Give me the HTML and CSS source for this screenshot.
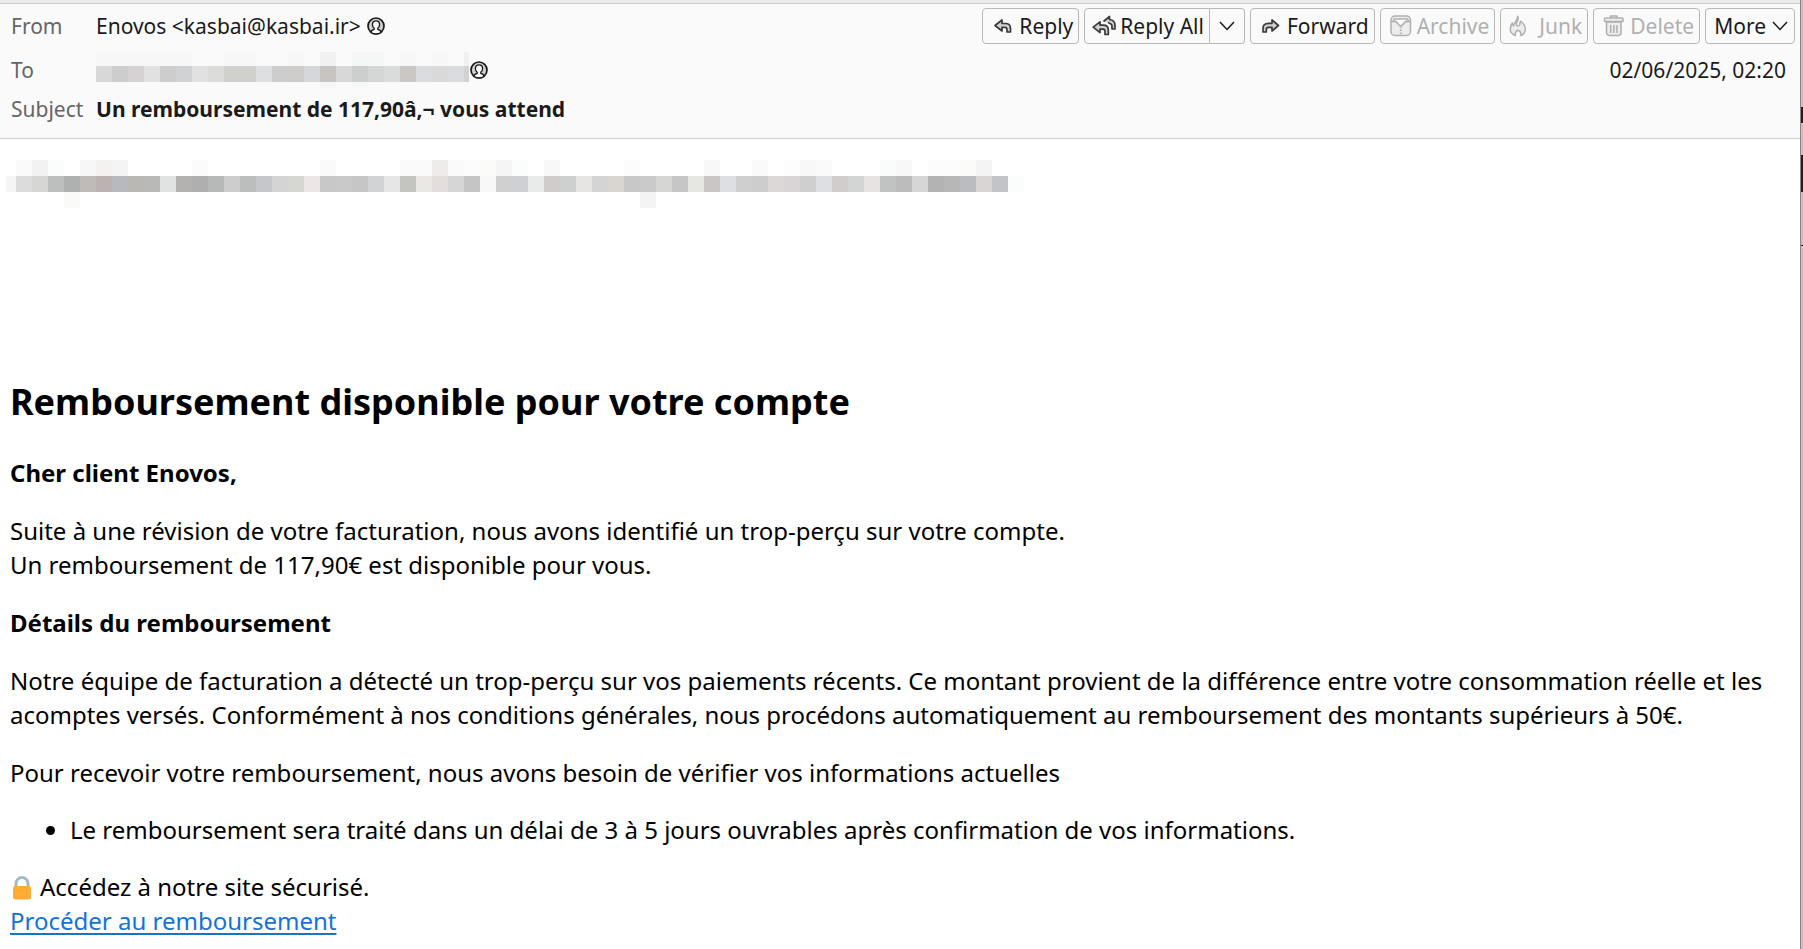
FILE: index.html
```html
<!DOCTYPE html>
<html lang="fr">
<head>
<meta charset="utf-8">
<title>Un remboursement de 117,90â,¬ vous attend</title>
<link rel="stylesheet" href="styles.css">
</head>
<body>
<svg class="defs" aria-hidden="true">
  <symbol id="contact" viewBox="0 0 18 18">
    <circle cx="9" cy="9" r="8" fill="#d0d0d0" stroke="#1a1a1a" stroke-width="1.700"/>
    <path d="M4 15.500c0-2 1.300-2.800 3.200-3.200v-1C6 10.300 5.400 8.900 5.400 7.400 5.400 5.200 6.800 3.800 9 3.800s3.600 1.400 3.600 3.600c0 1.500-.6 2.900-1.800 3.900v1c1.900.4 3.200 1.200 3.200 3.200-3 1.700-7 1.700-10 0z" fill="#fafafa" stroke="#1a1a1a" stroke-width="1.300"/>
  </symbol>
  <symbol id="chevron" viewBox="0 0 16 10"><path d="M1 1l7 7.500L15 1" fill="none" stroke="#1a1a1a" stroke-width="1.500"/></symbol>
</svg>
<div class="window">
<div class="message">
  <header class="head">
    <div class="row">
      <span class="label">From</span>
      <span class="value">Enovos &lt;kasbai@kasbai.ir&gt;</span>
      <svg class="contact from"><use href="#contact"/></svg>
      <div class="toolbar">
        <button class="btn"><svg class="ico" viewBox="0 0 24 24"><path d="M4 11.500 11 6v3.500h3.500c3.500 0 5 2 5 5V18H16v-2.500c0-1.700-.7-2.200-2.200-2.200H11V17z"/></svg>Reply</button>
        <div class="split">
          <button class="btn main"><svg class="ico" viewBox="0 0 24 24"><path d="M11.500 7.500 17.500 2.500v3c3.500.4 5.500 2.500 5.500 6v3.500h-3v-2.500c0-2-.5-2.700-2-3l-2-1"/><path d="M1.200 13.200 8 7.800v3.300h3.300c3.500 0 5 2 5 5V20.500h-3.300V17.500c0-1.800-.7-2.400-2-2.400H8v3.500z"/></svg>Reply All</button>
          <button class="btn drop" aria-label="Reply All options"><svg class="chev"><use href="#chevron"/></svg></button>
        </div>
        <button class="btn"><svg class="ico" viewBox="0 0 24 24"><path d="M19.500 11.500 13 6v3.300H9.500c-3.500 0-5.500 2-5.500 5V18h3.300v-2.300c0-1.800.8-2.400 2.200-2.400H13V17z"/></svg>Forward</button>
        <button class="btn" disabled><svg class="ico" viewBox="0 0 24 24"><rect x="2" y="2" width="19.500" height="19.500" rx="4"/><path d="M4.500 7.500V6a1 1 0 0 1 1-1H18a1 1 0 0 1 1 1v1.500h-2.500L13 11.500h-2.500L7 7.500z" fill="#fafafa"/><path d="M2.500 7.500H7M16.500 7.500H21"/><path d="M11.800 12.500v9" fill="none" stroke-dasharray="1.500 1.500" stroke-width="2"/></svg>Archive</button>
        <button class="btn" disabled><svg class="ico narrow" viewBox="3 0 18 24"><path d="M11.500 2.200c1.500 2 .5 4-.5 5.800-1 1.800-1 3 .2 3.800 1.300.7 2.600-.3 2.700-1.800.1-1 .1-1.800.6-2.800 3 2 4.800 4.600 4.800 8 0 3-1.600 5.300-4.500 6.300.6-3-.6-4.500-2.800-5.200-2 .7-3.200 2.200-2.700 5.200C6.300 20.500 4.300 18.300 4.300 15c0-2.500.9-4.200 2-6 .2 1.300.6 2.300 1.400 3C7.500 8.500 12 6.500 11.500 2.200z"/></svg>Junk</button>
        <button class="btn" disabled><svg class="ico" viewBox="0 0 24 24"><path d="M4.500 8h14.500v10.500a3 3 0 0 1-3 3h-8.500a3 3 0 0 1-3-3z"/><path d="M3.500 4h16.500a1 1 0 0 1 1 1v2.500H2.500V5a1 1 0 0 1 1-1zM8.500 4V2h6.500v2M8.700 11v8M11.800 11v8M14.900 11v8"/></svg>Delete</button>
        <button class="btn more">More<svg class="chev"><use href="#chevron"/></svg></button>
      </div>
    </div>
    <div class="row">
      <span class="label">To</span>
      <svg class="redacted-to" viewBox="0 0 373 36" role="img" aria-label="Redacted recipient" shape-rendering="crispEdges">
        <path fill="#f7f7f7" d="M0 0h96v14H0zM128 0h32v14h-32zM192 0h16v14h-16zM304 0h16v14h-16zM336 0h16v14h-16z"/>
        <path fill="#f1f1f1" d="M224 0h16v14h-16zM368 0h5v14h-5z"/><path fill="#f5f7f6" d="M256 0h32v14h-32zM224 30h16v6h-16zM256 30h16v6h-16z"/>
        <path fill="#d8d8d8" d="M0 14h16v16H0zM240 14h16v16h-16z"/><path fill="#cdcdcd" d="M16 14h16v16H16zM64 14h16v16H64zM176 14h16v16h-16z"/>
        <path fill="#d6d2d4" d="M32 14h16v16H32z"/><path fill="#e1e1e1" d="M48 14h16v16H48zM96 14h16v16H96z"/><path fill="#d0d2d4" d="M80 14h16v16H80z"/>
        <path fill="#dcdcdb" d="M112 14h16v16h-16z"/><path fill="#d0d0cd" d="M128 14h32v16h-32z"/><path fill="#dddfe1" d="M160 14h16v16h-16z"/>
        <path fill="#cecbcb" d="M192 14h16v16h-16z"/><path fill="#d6d7da" d="M208 14h16v16h-16z"/><path fill="#c7c4c1" d="M224 14h16v16h-16z"/>
        <path fill="#cccfcd" d="M256 14h16v16h-16z"/><path fill="#d4d6d5" d="M272 14h16v16h-16z"/><path fill="#dadbdb" d="M288 14h16v16h-16z"/>
        <path fill="#cac7c4" d="M304 14h16v16h-16z"/><path fill="#dbdce0" d="M320 14h16v16h-16zM352 14h16v16h-16z"/><path fill="#d9d9d9" d="M336 14h16v16h-16z"/><path fill="#d2d2d2" d="M368 14h5v16h-5z"/>
      </svg>
      <svg class="contact"><use href="#contact"/></svg>
      <time class="date" datetime="2025-06-02T02:20">02/06/2025, 02:20</time>
    </div>
    <div class="row subject">
      <span class="label">Subject</span>
      <strong class="value">Un remboursement de 117,90â,¬ vous attend</strong>
    </div>
  </header>
  <main class="content">
    <svg class="redacted-line" viewBox="0 0 1018 48" role="img" aria-label="Redacted line" shape-rendering="crispEdges">
      <g id="mosaic"></g>
    </svg>
    <h1>Remboursement disponible pour votre compte</h1>
    <p><strong>Cher client Enovos,</strong></p>
    <p>Suite à une révision de votre facturation, nous avons identifié un trop-perçu sur votre compte.<br>Un remboursement de 117,90€ est disponible pour vous.</p>
    <p><strong>Détails du remboursement</strong></p>
    <p>Notre équipe de facturation a détecté un trop-perçu sur vos paiements récents. Ce montant provient de la différence entre votre consommation réelle et les acomptes versés. Conformément à nos conditions générales, nous procédons automatiquement au remboursement des montants supérieurs à 50€.</p>
    <p>Pour recevoir votre remboursement, nous avons besoin de vérifier vos informations actuelles</p>
    <ul><li>Le remboursement sera traité dans un délai de 3 à 5 jours ouvrables après confirmation de vos informations.</li></ul>
    <p class="access"><svg class="lock" viewBox="0 0 20 24" aria-hidden="true"><path d="M4 12V7.500a6 6 0 0 1 12 0V12" fill="none" stroke="#aab8c2" stroke-width="3"/><rect x="1" y="10" width="18" height="13.500" rx="2.500" fill="#ffac33"/></svg>Accédez à notre site sécurisé.<br><a href="#">Procéder au remboursement</a></p>
  </main>
</div>
<div class="behind" aria-hidden="true"><i class="dark first"></i><i class="stripe"></i><i class="dark second"></i><i class="rule"></i></div>
</div>
<script src="mosaic.js"></script>
</body>
</html>
```

FILE: styles.css
```css
* { box-sizing: border-box; }
body {
  margin: 0;
  background: #fff;
  color: #000;
  font-family: "Noto Sans", "Open Sans", sans-serif;
}
.defs { position: absolute; width: 0; height: 0; }
.window { display: flex; min-height: 100vh; }
.message { flex: 1; min-width: 0; border-top: 3px solid #ebebeb; }

.head {
  padding: 0 5px 12px 11px;
  border-top: 1px solid #ccc;
  border-bottom: 1px solid #ccc;
  background: #fafafa;
  color: #1a1a1a;
  font-size: 21px;
  line-height: 34px;
}
.row { display: flex; align-items: center; height: 44px; }
.row.subject { height: 34px; }
.label { flex: none; width: 85px; color: #666; }
.value { white-space: nowrap; }
.contact { flex: none; width: 18px; height: 18px; margin-left: 1px; }
.contact.from { margin-left: 6px; }
.redacted-to { flex: none; width: 373px; height: 36px; }
.date { margin-left: auto; padding-right: 9px; }

.toolbar { display: flex; gap: 5px; margin-left: auto; }
.btn {
  display: flex;
  align-items: center;
  height: 36px;
  padding: 0 5px 0 8px;
  border: 1px solid #b8b8b8;
  border-radius: 4px;
  background: #fafafa;
  color: #1a1a1a;
  font: inherit;
  white-space: nowrap;
}
.btn:disabled { color: #b0b0b0; }
.split { display: flex; }
.btn.main { padding-left: 7px; border-radius: 4px 0 0 4px; }
.btn.drop { padding: 0 9px; border-left: 0; border-radius: 0 4px 4px 0; }
.btn.more { gap: 6px; padding: 0 6px 0 8px; }
.ico {
  width: 24px;
  height: 24px;
  margin-right: 4px;
  fill: #d0d0d0;
  stroke: #3a3a3a;
  stroke-width: 1.7;
  stroke-linejoin: round;
}
.ico.narrow { width: 18px; margin-right: 12px; }
.btn:disabled .ico { fill: #ededed; stroke: #b0b0b0; stroke-width: 1.5; }
.chev { width: 16px; height: 10px; }

.content { padding: 21px 10px 0; font-size: 24px; line-height: 34px; }
.redacted-line { display: block; width: 1018px; height: 48px; margin-left: -4px; }
h1 { margin: 168px 0 0; font-size: 36px; line-height: 52px; }
h1 + p { margin-top: 28px; }
p { margin: 24px 0; }
ul { margin: 23px 0; padding-left: 60px; }
p:has(+ ul) { margin-bottom: 23px; }
.access { margin-top: 23px; }
a { color: #1373d9; text-underline-offset: 3px; }
.lock { width: 20px; height: 24px; margin: 0 8px 0 2px; vertical-align: -4px; }

.behind {
  width: 3px;
  border-left: 1px solid #858585;
  background: #c4c4c4;
}
.behind i { display: block; }
.dark { background: #20251c; }
.dark.first { height: 16px; margin-top: 107px; }
.stripe { height: 2px; margin: 4px 0 26px; background: #d8b8a5; }
.dark.second { height: 37px; }
.rule { height: 1px; margin-top: 53px; background: #222; }
```

FILE: mosaic.js
```js
// Rows of pixelation blocks: [y, { column: colour }], 16px columns.
const middle = ("dcdcdc d6d6d3 bcbfbd aeb1af bebbb8 bab3b2 b8b9be bab8b5 b9bab6 e0e3e1 b4b2af afafb0 b6b9b7 cdcdcd bbbebc c6c7ca d4d4d5 d5d5d2 ebe5e4 c8c8c8 c9c9c9 c6c6c6 d0d4d5 e6e6e6 c4c4c1 eae8e5 e3dddc d6d6d6 c5c5c5 f8f8f8 d0d0d0 cfd0d3 e8ebe9 cecbc8 cdd0ce e6e5e2 d4d4d5 d8d5d1 c8c8c8 cacaca d5d5d1 c6c6c7 e6e6e3 c9c6c3 dddee1 cfcfd0 cccccc dbd8d6 d8d4d5 cfcfcf dddee1 d0cdcb d2d5d3 e6e3e0 c0c3c1 bcbcbc d5d5d6 b3b3b3 b7b7b7 babcbf d8d5d2 c1c3c7 f9fdfb").split(" ");
const top16 = { 0: "f9f9f9", 1: "f2f2f2", 2: "fafdfc", 4: "f7f7f7", 5: "f3f2f0", 6: "f4f4f4", 11: "fbfbfb", 19: "fafafa", 24: "f9f9f9", 25: "f9f9f9", 26: "eeecea", 27: "fafafa", 28: "fcfcfc", 29: "fbfbf8", 30: "f5f5f5", 31: "fafdfc", 33: "f8f8f8", 38: "fcfcfc", 43: "f8f8f8", 46: "fafafa", 48: "fdfdfd", 49: "f8f8f8", 50: "fafafa", 54: "f9fcfb", 55: "f8f8f8", 57: "fcfcfc", 58: "fcfcfc", 59: "fbfbf8", 60: "f4f4f4" };
const bottom = { 3: "f9f9f7", 39: "f4f4f4" };
const group = document.getElementById("mosaic");
function block(x, y, width, colour) {
  const rect = document.createElementNS("http://www.w3.org/2000/svg", "rect");
  rect.setAttribute("x", x);
  rect.setAttribute("y", y);
  rect.setAttribute("width", width);
  rect.setAttribute("height", 16);
  rect.setAttribute("fill", "#" + colour);
  group.appendChild(rect);
}
block(0, 16, 10, "f5f5f5");
middle.forEach((colour, i) => block(10 + i * 16, 16, 16, colour));
[[0, top16], [32, bottom]].forEach(([y, cells]) => {
  Object.entries(cells).forEach(([i, colour]) => block(10 + i * 16, y, 16, colour));
});
```
